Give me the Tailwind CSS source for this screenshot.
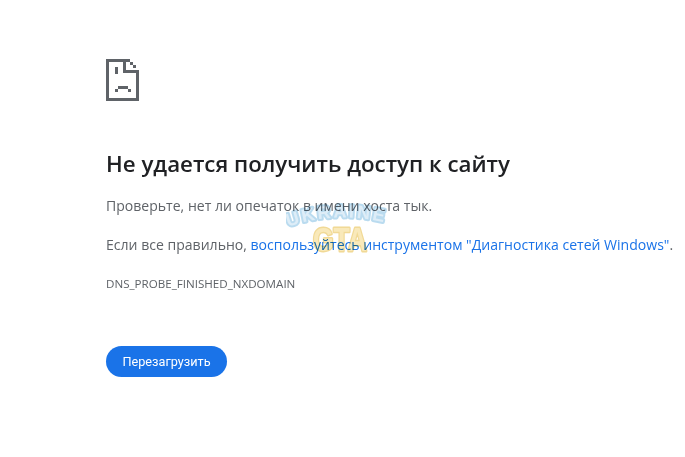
<!DOCTYPE html>
<html lang="ru">
<head>
<meta charset="UTF-8">
<title>Ошибка</title>
<script src="https://cdn.jsdelivr.net/npm/@tailwindcss/browser@4"></script>
</head>
<body class="bg-white overflow-hidden font-['Open_Sans','Noto_Sans',sans-serif] text-[#5f6368]">

<main class="relative w-[685px] h-[457px] pl-[106px] pt-[59px]">
   <!-- pixel icon -->
   <svg class="block" width="33" height="42" viewBox="0 0 33 42" shape-rendering="crispEdges" fill="#5f6368">
      <path d="M0 0H24V3H3V39H30V11H33V42H0Z"/>
      <path d="M24 3H27V6H24ZM27 6H30V9H27Z"/>
      <path d="M17 3H20V11H30V14H17Z"/>
      <path d="M9 8H12V15H9Z"/>
      <path d="M12 27H22V30H12ZM9 30H12V33H9ZM22 30H25V33H22Z"/>
   </svg>

   <h1 class="mt-[48px] text-[22.3px] leading-[30px] font-semibold text-[#202124]">Не удается получить доступ к сайту</h1>
   <p class="mt-[15px] text-[14.05px] leading-[24px]">Проверьте, нет ли опечаток в имени хоста тык.</p>
   <p class="mt-[15px] text-[14.05px] leading-[24px] whitespace-nowrap">Если все правильно, <a href="#" class="text-[#1a73e8]">воспользуйтесь инструментом "Диагностика сетей Windows"</a>.</p>
   <p class="mt-[19px] text-[11.6px] leading-[16px]">DNS_PROBE_FINISHED_NXDOMAIN</p>
   <button class="block mt-[54px] w-[121px] h-[31px] rounded-full bg-[#1a73e8] text-white text-[12.7px] font-['Roboto',sans-serif]">Перезагрузить</button>

   <!-- watermark -->
   <svg class="absolute left-[286px] top-[193px] pointer-events-none mix-blend-multiply" width="124" height="68" viewBox="0 0 124 68" font-family="Liberation Sans, sans-serif" font-weight="700" stroke-linejoin="round">
      <defs><path id="arc" d="M2 34Q58 14 122 36"/></defs>
      <text font-size="18" letter-spacing="2.5" fill="#d6e9f6" stroke="#a9d3ec" stroke-width="4" paint-order="stroke" opacity="0.8"><textPath href="#arc">UKRAINE</textPath></text>
      <text x="27" y="58" font-size="33" textLength="54" lengthAdjust="spacingAndGlyphs" fill="#f8e6ae" stroke="#efd384" stroke-width="3" paint-order="stroke" opacity="0.85">GTA</text>
   </svg>
</main>

</body>
</html>
